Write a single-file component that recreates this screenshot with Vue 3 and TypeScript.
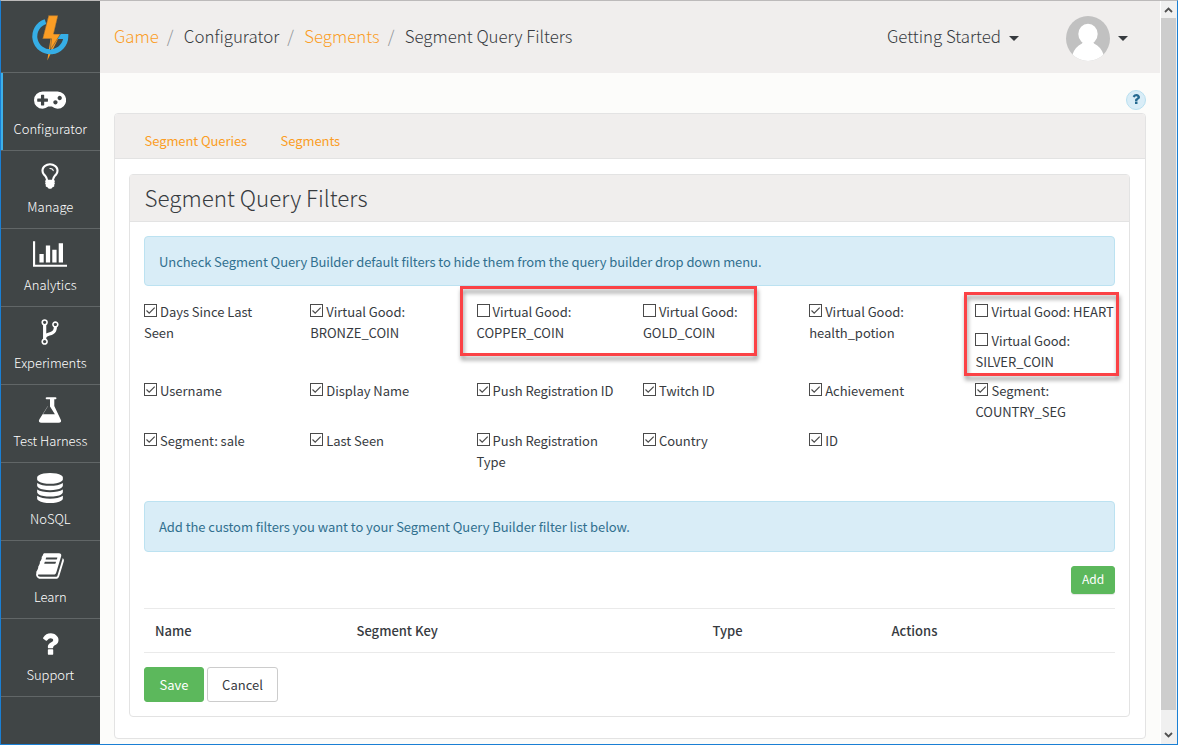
<script setup lang="ts">
interface NavItem { label: string; width: number; path: string; active?: boolean }
interface Filter { lines: string[]; on: boolean }

const nav: NavItem[] = [
  { label: 'Configurator', width: 1920, active: true, path: 'M832 1088v-128q0-14-9-23t-23-9h-192v-192q0-14-9-23t-23-9h-128q-14 0-23 9t-9 23v192h-192q-14 0-23 9t-9 23v128q0 14 9 23t23 9h192v192q0 14 9 23t23 9h128q14 0 23-9t9-23v-192h192q14 0 23-9t9-23zm576 64q0-53-37.5-90.5t-90.5-37.5-90.5 37.5-37.5 90.5 37.5 90.5 90.5 37.5 90.5-37.5 37.5-90.5zm256-256q0-53-37.5-90.5t-90.5-37.5-90.5 37.5-37.5 90.5 37.5 90.5 90.5 37.5 90.5-37.5 37.5-90.5zm256 128q0 212-150 362t-362 150q-192 0-338-128h-220q-146 128-338 128-212 0-362-150t-150-362 150-362 362-150h896q212 0 362 150t150 362z' },
  { label: 'Manage', width: 1792, path: 'M1120 576q0 13-9.5 22.5t-22.5 9.5-22.5-9.5-9.5-22.5q0-46-54-71t-106-25q-13 0-22.5-9.5t-9.5-22.5 9.5-22.5 22.5-9.5q50 0 99.5 16t87 54 37.5 90zm160 0q0-72-34.5-134t-90-101.5-123-62-136.5-22.5-136.5 22.5-123 62-90 101.5-34.5 134q0 101 68 180 10 11 30.5 33t30.5 33q128 153 141 298h228q13-145 141-298 10-11 30.5-33t30.5-33q68-79 68-180zm128 0q0 155-103 268-45 49-74.5 87t-59.5 95.5-34 107.5q47 28 47 82 0 37-25 64 25 27 25 64 0 52-45 81 13 23 13 47 0 46-31.5 71t-77.5 25q-20 44-60 70t-87 26-87-26-60-70q-46 0-77.5-25t-31.5-71q0-24 13-47-45-29-45-81 0-37 25-64-25-27-25-64 0-54 47-82-4-50-34-107.5t-59.5-95.5-74.5-87q-103-113-103-268 0-99 44.5-184.5t117-142 164-89 186.5-32.5 186.5 32.5 164 89 117 142 44.5 184.5z' },
  { label: 'Analytics', width: 2048, path: 'M640 896v512h-256v-512h256zm384-512v1024h-256v-1024h256zm1024 1152v128h-2048v-1536h128v1408h1920zm-640-896v768h-256v-768h256zm384-384v1152h-256v-1152h256z' },
  { label: 'Experiments', width: 1792, path: 'M672 1472q0-40-28-68t-68-28-68 28-28 68 28 68 68 28 68-28 28-68zm0-1152q0-40-28-68t-68-28-68 28-28 68 28 68 68 28 68-28 28-68zm640 128q0-40-28-68t-68-28-68 28-28 68 28 68 68 28 68-28 28-68zm96 0q0 52-26 96.5t-70 69.5q-2 287-226 414-67 38-203 81-128 40-169.5 71t-41.5 100v26q44 25 70 69.5t26 96.5q0 80-56 136t-136 56-136-56-56-136q0-52 26-96.5t70-69.5v-820q-44-25-70-69.5t-26-96.5q0-80 56-136t136-56 136 56 56 136q0 52-26 96.5t-70 69.5v497q54-26 154-57 55-17 87.5-29.5t70.5-31 59-39.5 40.5-51 28-69.5 8.5-91.5q-44-25-70-69.5t-26-96.5q0-80 56-136t136-56 136 56 56 136z' },
  { label: 'Test Harness', width: 1792, path: 'M1527 1448q56 89 21.5 152.5t-140.5 63.5h-1024q-106 0-140.5-63.5t21.5-152.5l503-793v-399h-64q-26 0-45-19t-19-45 19-45 45-19h512q26 0 45 19t19 45-19 45-45 19h-64v399zm-779-725l-272 429h712l-272-429-20-31v-436h-128v436z' },
  { label: 'NoSQL', width: 1792, path: 'M896 768q237 0 443-43t325-127v170q0 69-103 128t-280 93.5-385 34.5-385-34.5-280-93.5-103-128v-170q119 84 325 127t443 43zm0 768q237 0 443-43t325-127v170q0 69-103 128t-280 93.5-385 34.5-385-34.5-280-93.5-103-128v-170q119 84 325 127t443 43zm0-384q237 0 443-43t325-127v170q0 69-103 128t-280 93.5-385 34.5-385-34.5-280-93.5-103-128v-170q119 84 325 127t443 43zm0-1152q208 0 385 34.5t280 93.5 103 128v128q0 69-103 128t-280 93.5-385 34.5-385-34.5-280-93.5-103-128v-128q0-69 103-128t280-93.5 385-34.5z' },
  { label: 'Learn', width: 1792, path: 'M1703 478q40 57 18 129l-275 906q-19 64-76.5 107.5t-122.5 43.5h-923q-77 0-148.5-53.5t-99.5-131.5q-24-67-2-127 0-4 3-27t4-37q1-8-3-21.5t-3-19.5q2-11 8-21t16.5-23.5 16.5-23.5q23-38 45-91.5t30-91.5q3-10 .5-30t-.5-28q3-11 17-28t17-23q21-36 42-92t25-90q1-9-2.5-32t.5-28q4-13 22-30.5t22-22.5q19-26 42.5-84.5t27.5-96.5q1-8-3-25.5t-2-26.5q2-8 9-18t18-23 17-21q8-12 16.5-30.5t15-35 16-36 19.5-32 26.5-23.5 36-11.5 47.5 5.5l-1 3q38-9 51-9h761q74 0 114 56t18 130l-274 906q-36 119-71.5 153.5t-128.5 34.5h-869q-27 0-38 15-11 16-1 43 24 70 144 70h923q29 0 56-15.5t35-41.5l300-987q7-22 5-57 38 15 59 43zm-1064 2q-4 13 2 22.5t20 9.5h608q13 0 25.5-9.5t16.5-22.5l21-64q4-13-2-22.5t-20-9.5h-608q-13 0-25.5 9.5t-16.5 22.5zm-83 256q-4 13 2 22.5t20 9.5h608q13 0 25.5-9.5t16.5-22.5l21-64q4-13-2-22.5t-20-9.5h-608q-13 0-25.5 9.5t-16.5 22.5z' },
  { label: 'Support', width: 1792, path: 'M1088 1256v240q0 16-12 28t-28 12h-240q-16 0-28-12t-12-28v-240q0-16 12-28t28-12h240q16 0 28 12t12 28zm316-600q0 54-15.5 101t-35 76.5-55 59.5-57.5 43.5-61 35.5q-41 23-68.5 65t-27.5 67q0 17-12 32.5t-28 15.5h-240q-15 0-25.5-18.5t-10.5-37.5v-45q0-83 65-156.5t143-108.5q59-27 84-56t25-76q0-42-46.5-74t-107.5-32q-65 0-108 29-35 25-107 115-13 16-31 16-12 0-25-8l-164-125q-13-10-15.5-25t5.5-28q160-266 464-266 80 0 161 31t146 83 106 127.5 41 158.5z' },
]

const f = (on: boolean, ...lines: string[]): Filter => ({ lines, on })
const rows: Filter[][][] = [
  [
    [f(true, 'Days Since Last', 'Seen')],
    [f(true, 'Virtual Good:', 'BRONZE_COIN')],
    [f(false, 'Virtual Good:', 'COPPER_COIN')],
    [f(false, 'Virtual Good:', 'GOLD_COIN')],
    [f(true, 'Virtual Good:', 'health_potion')],
    [f(false, 'Virtual Good: HEART'), f(false, 'Virtual Good:', 'SILVER_COIN')],
  ],
  [
    [f(true, 'Username')],
    [f(true, 'Display Name')],
    [f(true, 'Push Registration ID')],
    [f(true, 'Twitch ID')],
    [f(true, 'Achievement')],
    [f(true, 'Segment:', 'COUNTRY_SEG')],
  ],
  [
    [f(true, 'Segment: sale')],
    [f(true, 'Last Seen')],
    [f(true, 'Push Registration', 'Type')],
    [f(true, 'Country')],
    [f(true, 'ID')],
  ],
]
</script>

<template>
  <div class="window">
    <aside class="sidebar">
      <div class="logo">
        <svg width="40" height="48" viewBox="0 0 40 48">
          <path d="M17.600 1.600H27L22.600 20H29.500L16.300 46.500L19.500 24.800H11.600z" fill="#fb9d24" />
          <path d="M14.500 7.600A15.500 15.500 0 1 0 34.800 22.500H25.500" fill="none" stroke="#36aee6" stroke-width="5" />
          <path d="M17.600 1.600H27L22.600 20H29.500L19.300 36L20.500 24.800H11.600z" fill="#fb9d24" stroke="#404546" stroke-width=".5" />
        </svg>
      </div>
      <a v-for="n in nav" :key="n.label" class="nav-item" :class="{ active: n.active }">
        <svg class="nav-icon" :width="(n.width * 30) / 1792" height="30" :viewBox="`0 0 ${n.width} 1792`"><path :d="n.path" /></svg>
        <span>{{ n.label }}</span>
      </a>
    </aside>

    <main class="main">
      <header class="topbar">
        <nav class="crumbs">
          <a>Game</a><i>/</i><span>Configurator</span><i>/</i><a>Segments</a><i>/</i><span>Segment Query Filters</span>
        </nav>
        <div class="started">Getting Started<b class="caret"></b></div>
        <div class="user">
          <svg width="44" height="45" viewBox="0 0 44 45">
            <defs><clipPath id="face"><ellipse cx="22" cy="22.500" rx="22" ry="22.500" /></clipPath></defs>
            <g clip-path="url(#face)">
              <rect width="44" height="45" fill="#c1c1c1" />
              <ellipse cx="22" cy="18" rx="9.700" ry="10.300" fill="#fff" />
              <path d="M17 25h10l1 2.500q7 3 10 12V46H6v-6.500q3-9 10-12z" fill="#fff" />
            </g>
          </svg>
          <b class="caret"></b>
        </div>
      </header>

      <div class="body">
        <div class="help-row"><span class="help"><svg width="14" height="14" viewBox="0 0 1792 1792"><path :d="nav[7].path" /></svg></span></div>
        <section class="card">
          <div class="tabs"><a>Segment Queries</a><a>Segments</a></div>
          <section class="panel">
            <h1>Segment Query Filters</h1>
            <div class="content">
              <div class="alert">Uncheck Segment Query Builder default filters to hide them from the query builder drop down menu.</div>
              <div class="filters">
                <div v-for="(row, r) in rows" :key="r" class="filter-row">
                  <div v-for="(cell, c) in row" :key="c" class="cell">
                    <label v-for="item in cell" :key="item.lines.join()" class="filter">
                      <span class="first">
                        <svg class="box" width="13" height="13" viewBox="0 0 13 13">
                          <rect x=".5" y=".5" width="12" height="12" fill="#fff" stroke="#4a4a4a" />
                          <path v-if="item.on" d="M2.500 6.500 5.200 9.200 10.700 3.600" fill="none" stroke="#4a4a4a" stroke-width="1.200" />
                        </svg>{{ item.lines[0] }}</span>
                      <span v-if="item.lines[1]" class="second">{{ item.lines[1] }}</span>
                    </label>
                  </div>
                </div>
                <div class="mark mark-coins"></div>
                <div class="mark mark-heart"></div>
              </div>
              <div class="alert second-alert">Add the custom filters you want to your Segment Query Builder filter list below.</div>
              <div class="add-row"><button class="btn green small">Add</button></div>
              <div class="thead"><span>Name</span><span>Segment Key</span><span>Type</span><span>Actions</span></div>
              <div class="actions"><button class="btn green save">Save</button><button class="btn cancel">Cancel</button></div>
            </div>
          </section>
        </section>
      </div>
    </main>

    <div class="scrollbar">
      <div class="arrow"><svg width="9" height="6" viewBox="0 0 9 6"><path d="M1 5 4.500 1.500 8 5" /></svg></div>
      <div class="thumb"></div>
      <div class="arrow down"><svg width="9" height="6" viewBox="0 0 9 6"><path d="M1 1 4.500 4.500 8 1" /></svg></div>
    </div>
  </div>
</template>

<style>
body { background: #fcfcfa; overflow: hidden; }
</style>

<style scoped>
* { box-sizing: border-box; }
.window {
  display: flex;
  width: 1178px;
  height: 745px;
  overflow: hidden;
  border: 1px solid #1a7fd4;
  border-top-color: #bcbaba;
  background: #fcfcfa;
  color: #373b3f;
  font-family: "Noto Sans CJK SC", "Open Sans", sans-serif;
  font-size: 13px;
  line-height: 21px;
  white-space: nowrap;
}
.sidebar { width: 99px; background: #404546; color: #fff; flex: none; }
.logo { height: 72px; border-bottom: 1px solid #616667; padding: 13px 0 0 30px; }
.logo svg { display: block; }
.nav-item {
  display: flex;
  flex-direction: column;
  align-items: center;
  height: 78px;
  padding: 10px 0.4px 0 0;
  border-bottom: 1px solid #616667;
  font-weight: 300;
}
.nav-item.active { box-shadow: inset 2px 0 #3db0ea; }
.nav-icon { fill: #fff; display: block; flex: none; }
.nav-item span { margin-top: 5px; letter-spacing: -0.020px; }
.main { flex: 1; min-width: 0; }
.topbar { display: flex; height: 72px; background: #f0eeed; padding-left: 14px; font-size: 16.850px; font-weight: 200; }
.crumbs { display: flex; align-items: center; width: 773px; padding-bottom: 4px; }
.crumbs i { width: 25px; padding-left: 8px; font-style: normal; color: #8d9296; }
a { color: #fb9d24; }
.nav-item { color: #fff; }
.started { display: flex; align-items: center; width: 179px; padding-bottom: 4px; }
.caret { border: 5px solid transparent; border-top-color: #373b3f; border-bottom: 0; margin: 7px 0 0 8px; }
.user { display: flex; align-items: center; padding-top: 3px; }
.user .caret { margin-top: 0; }
.body { padding: 0 14px; }
.help-row { display: flex; justify-content: flex-end; height: 40px; padding-top: 17px; }
.help { display: flex; justify-content: center; width: 20px; height: 20px; padding-top: 1px; border: 1px solid #b9e0f0; border-radius: 10px; background: #d9edf7; }
.help svg { fill: #266a91; }
.card { height: 626px; border: 1px solid #e3e3e3; border-radius: 4px; background: #fff; padding: 0 15px 0 14px; }
.tabs { display: flex; gap: 33.500px; height: 45px; margin: 0 -15px 15px -14px; padding: 16px 0 0 29.500px; background: #f0eeed; border-bottom: 1px solid #e3e3e3; border-radius: 3px 3px 0 0; letter-spacing: -0.080px; }
.panel { height: 543px; border: 1px solid #e3e3e3; border-radius: 4px; }
h1 { height: 47px; margin: 0; padding-left: 14.500px; background: #f0eeed; border-bottom: 1px solid #e3e3e3; font-size: 22.400px; font-weight: 200; line-height: 44px; }
.content { padding: 14px 14px 0; }
.alert { height: 50px; padding: 14px; border: 1px solid #bce2f1; border-radius: 4px; background: #d9edf7; color: #31708f; letter-spacing: -0.080px; }
.filters { position: relative; height: 215px; padding-top: 15px; }
.filter-row { display: grid; grid-template-columns: repeat(6, 166.310px); height: 79px; letter-spacing: -0.040px; }
.filter-row:nth-child(2) { height: 50px; }
.filter { display: block; margin-bottom: 8px; }
.first, .second { display: flex; height: 21px; }
.box { display: block; flex: none; margin: 3px 3px 0 0; }
.mark { position: absolute; border: 3px solid #fb4246; filter: drop-shadow(1px 4px 2px rgba(0, 0, 0, 0.4)); }
.mark-coins { left: 316px; top: 0; width: 297px; height: 70px; }
.mark-heart { left: 820px; top: 6px; width: 155px; height: 84px; }
.second-alert { height: 51px; letter-spacing: -0.065px; }
.add-row { display: flex; justify-content: flex-end; padding: 14px 0; }
.btn { height: 35px; padding: 0; border: 1px solid #ccc; border-radius: 3px; background: #fff; color: #373b3f; font: inherit; }
.green { border-color: #5cb85c; background: #5cb85c; color: #fff; }
.small { width: 44px; height: 28px; padding-bottom: 2px; font-size: 12px; line-height: 18px; box-shadow: 0 1px 1px rgba(0, 0, 0, 0.1); }
.thead { display: grid; grid-template-columns: 201.500px 356px 179px 1fr; height: 45px; padding: 11px; border: solid #eaeaea; border-width: 1px 0; font-weight: 500; }
.actions { display: flex; gap: 3px; padding-top: 14px; }
.save { width: 60px; }
.cancel { width: 71px; }
.scrollbar { display: flex; flex-direction: column; width: 17px; flex: none; border-left: 1px solid #fff; border-right: 1px solid #f0f0f0; background: #f0f0f0; }
.arrow { display: flex; align-items: center; justify-content: center; height: 17px; }
.arrow path { fill: none; stroke: #505050; stroke-width: 1.800; }
.thumb { height: 692px; background: #cdcdcd; }
.down { height: 34px; padding-top: 16px; }
</style>
